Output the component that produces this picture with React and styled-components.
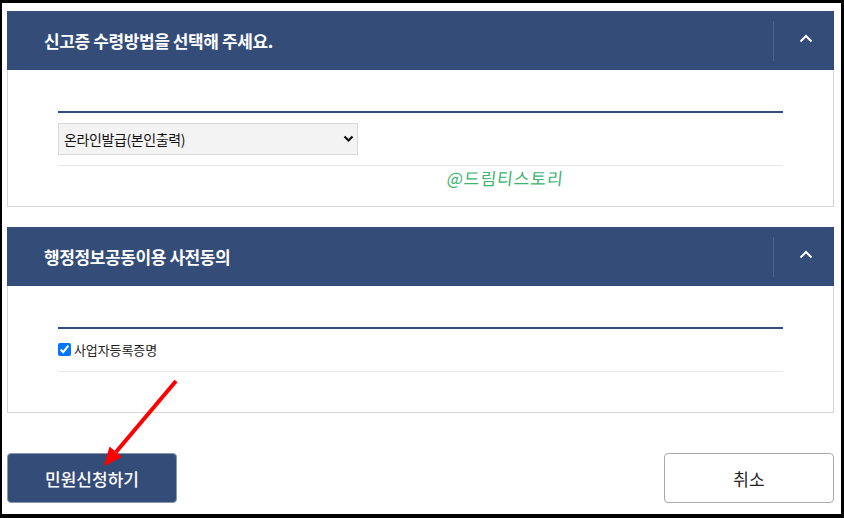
import React from "react";
import styled, { createGlobalStyle } from "styled-components";

const NAVY = "#344c78";
const KR = `"Noto Sans CJK KR", "Noto Sans", sans-serif`;

const GlobalStyle = createGlobalStyle`
  html, body {
    margin: 0;
    padding: 0;
    background: #000;
  }
  * {
    box-sizing: border-box;
  }
`;

const Frame = styled.div`
  position: relative;
  width: 844px;
  height: 518px;
  border-style: solid;
  border-color: #000;
  border-width: 3px 3px 4px 2px;
  background: #fff;
  padding: 8px 7px 0 5px;
  font-family: ${KR};
  overflow: hidden;
`;

const Panel = styled.section`
  margin-bottom: 20px;
`;

const PanelHeader = styled.div`
  display: flex;
  align-items: center;
  height: 59px;
  background: ${NAVY};
`;

const Title = styled.h2`
  flex: 1;
  margin: 0;
  padding-left: 37px;
  color: #fff;
  font-size: 17px;
  font-weight: 700;
  letter-spacing: -0.4px;
`;

const Divider = styled.span`
  width: 1px;
  height: 40px;
  background: #4d6390;
`;

const Toggle = styled.button`
  display: flex;
  align-items: center;
  justify-content: center;
  width: 60px;
  height: 100%;
  padding: 0 0 4px 4px;
  border: 0;
  background: transparent;
  color: #fff;
`;

const PanelBody = styled.div`
  border: 1px solid #d5d5d5;
  border-top: 0;
  padding: 41px 50px 40px;
`;

const Field = styled.div`
  border-top: 2px solid ${NAVY};
  border-bottom: 1px solid #e8e8e8;
  display: flex;
  align-items: center;
  height: ${(p) => p.$height}px;
`;

const SelectWrap = styled.div`
  position: relative;
  width: 300px;
  height: 32px;
`;

const Select = styled.select`
  appearance: none;
  width: 100%;
  height: 100%;
  padding: 0 24px 0 5px;
  border: 1px solid #d9d9d9;
  background: #f3f3f3;
  color: #111;
  font-family: ${KR};
  font-size: 14px;
  letter-spacing: -0.4px;
  outline: none;
`;

const SelectArrow = styled.svg`
  position: absolute;
  right: 4px;
  top: 12px;
  pointer-events: none;
`;

const CheckLabel = styled.label`
  display: flex;
  align-items: center;
  gap: 3px;
  color: #222;
  font-size: 13px;
  letter-spacing: -0.1px;
  padding-bottom: 2px;

  input {
    margin: 0;
    width: 13px;
    height: 13px;
    accent-color: #0075ff;
  }
`;

const Watermark = styled.div`
  position: absolute;
  left: 445px;
  top: 162px;
  color: #3cb46e;
  font-size: 17px;
  font-weight: 400;
  letter-spacing: 1px;
  transform: skewX(-6deg);
`;

const Actions = styled.div`
  display: flex;
  justify-content: space-between;
  margin-top: 40px;
`;

const Button = styled.button`
  width: 170px;
  height: 50px;
  border-radius: 4px;
  border: 1px solid ${(p) => (p.$primary ? "#8a97ad" : "#a9a9a9")};
  background: ${(p) => (p.$primary ? NAVY : "#fff")};
  color: ${(p) => (p.$primary ? "#fff" : "#222")};
  font-family: ${KR};
  font-size: 17px;
  font-weight: ${(p) => (p.$primary ? 500 : 400)};
  letter-spacing: 0;
`;

const Annotation = styled.svg`
  position: absolute;
  left: -2px;
  top: -3px;
  pointer-events: none;
`;

const Chevron = () => (
  <svg width="14" height="9" viewBox="0 0 14 9">
    <path d="M1.5 7.5 L7 2 L12.5 7.5" fill="none" stroke="#fff" strokeWidth="2" />
  </svg>
);

const AccordionPanel = ({ title, children }) => (
  <Panel>
    <PanelHeader>
      <Title>{title}</Title>
      <Divider />
      <Toggle aria-label="접기">
        <Chevron />
      </Toggle>
    </PanelHeader>
    <PanelBody>{children}</PanelBody>
  </Panel>
);

export default function App() {
  return (
    <>
      <GlobalStyle />
      <Frame>
        <AccordionPanel title="신고증 수령방법을 선택해 주세요.">
          <Field $height={55}>
            <SelectWrap>
              <Select defaultValue="online">
                <option value="online">온라인발급(본인출력)</option>
              </Select>
              <SelectArrow width="11" height="8" viewBox="0 0 11 8">
                <path d="M1.5 1.5 L5.5 5.5 L9.5 1.5" fill="none" stroke="#111" strokeWidth="2.2" />
              </SelectArrow>
            </SelectWrap>
          </Field>
        </AccordionPanel>

        <AccordionPanel title="행정정보공동이용 사전동의">
          <Field $height={45}>
            <CheckLabel>
              <input type="checkbox" defaultChecked />
              사업자등록증명
            </CheckLabel>
          </Field>
        </AccordionPanel>

        <Actions>
          <Button $primary>민원신청하기</Button>
          <Button>취소</Button>
        </Actions>

        <Watermark>@드림티스토리</Watermark>

        <Annotation width="844" height="518" viewBox="0 0 844 518">
          <line x1="176" y1="381" x2="116" y2="452" stroke="#f00" strokeWidth="4" />
          <polygon points="104,466 122,457 109.5,446.5" fill="#f00" />
        </Annotation>
      </Frame>
    </>
  );
}
